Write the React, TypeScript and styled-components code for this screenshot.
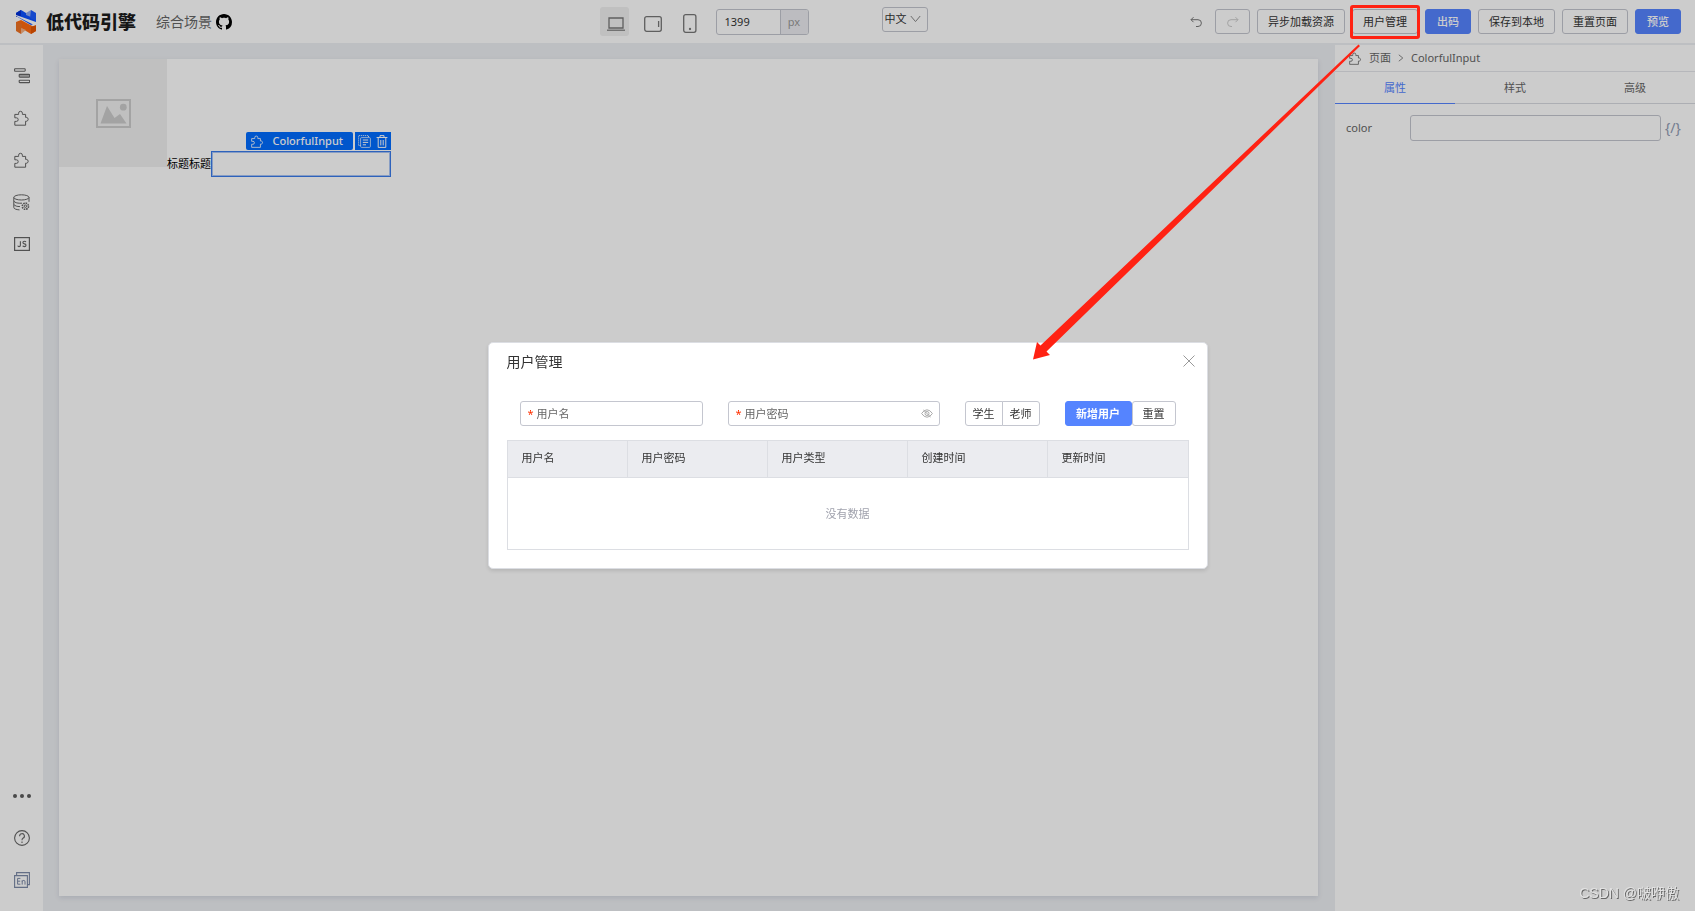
import React from "react";
import styled, { createGlobalStyle, css } from "styled-components";

const GlobalStyle = createGlobalStyle`
  *, *::before, *::after { box-sizing: border-box; }
  body {
    margin: 0;
    font-family: "Noto Sans", "Noto Sans CJK SC", sans-serif;
    font-size: 11px;
    line-height: 16px;
    color: #333;
    background: #fff;
  }
  button, input, select { font: inherit; color: inherit; margin: 0; }
  svg { display: block; flex: none; }
`;

const Page = styled.div`
  display: flex;
  flex-direction: column;
  min-height: 100vh;
  position: relative;
`;

/* ---------- header ---------- */

const Header = styled.header`
  display: flex;
  align-items: center;
  height: 45px;
  padding: 0 14px 0 16px;
  border-bottom: 2px solid #edeff3;
`;

const Brand = styled.div`
  display: flex;
  align-items: center;
  width: 327px;
`;

const BrandName = styled.span`
  margin: 0 20px 0 10px;
  font-size: 18px;
  line-height: 24px;
  font-weight: 900;
  color: #1c1c1c;
`;

const Scene = styled.a`
  display: flex;
  align-items: center;
  gap: 4px;
  font-size: 14px;
  line-height: 20px;
  color: #666;
  text-decoration: none;
`;

const Center = styled.div`
  flex: 1;
  display: flex;
  justify-content: center;
  align-items: center;
`;

const DeviceButton = styled.button<{ $active?: boolean }>`
  display: grid;
  place-items: center;
  width: 29px;
  height: 29px;
  margin-right: 8px;
  padding: 4px 0 0 3px;
  border: 0;
  border-radius: 3px;
  background: ${(p) => (p.$active ? "#f0f0f1" : "transparent")};
`;

const SizeField = styled.label`
  display: flex;
  width: 93px;
  height: 26px;
  margin: 0 73px 0 5px;
  border: 1px solid #c4c6cf;
  border-radius: 3px;
  overflow: hidden;
`;

const SizeInput = styled.input`
  flex: 1;
  min-width: 0;
  padding: 0 8px;
  border: 0;
  outline: 0;
  background: transparent;
`;

const Unit = styled.span`
  width: 28px;
  border-left: 1px solid #c4c6cf;
  background: #ebecf0;
  color: #999;
  line-height: 24px;
  text-align: center;
`;

const LangBox = styled.div`
  position: relative;
  margin-bottom: 4px;
`;

const LangSelect = styled.select`
  appearance: none;
  width: 46px;
  height: 25px;
  padding: 0 0 1px 2px;
  border: 1px solid #c4c6cf;
  border-radius: 3px;
  background: transparent;
`;

const LangArrow = styled.svg`
  position: absolute;
  right: 7px;
  top: 8px;
  pointer-events: none;
`;

const Actions = styled.div`
  display: flex;
  align-items: center;
  gap: 7px;
`;

const Button = styled.button<{ $primary?: boolean }>`
  display: inline-flex;
  align-items: center;
  justify-content: center;
  height: 25px;
  padding: 0 ${(p) => (p.$primary ? 11 : 10)}px;
  border: 1px solid ${(p) => (p.$primary ? "#5584ff" : "#c4c6cf")};
  border-radius: 3px;
  background: ${(p) => (p.$primary ? "#5584ff" : "#fff")};
  color: ${(p) => (p.$primary ? "#fff" : "#333")};
  font-weight: ${(p) => (p.$primary ? 500 : 400)};
  white-space: nowrap;
  &:disabled { color: #ccc; }
`;

const PlainButton = styled.button`
  display: grid;
  place-items: center;
  width: 24px;
  height: 25px;
  padding: 0;
  border: 0;
  background: transparent;
  color: #777;
`;

const RedoButton = styled(Button)`
  width: 35px;
`;

const Highlight = styled.span`
  position: relative;
  display: flex;
  &::after {
    content: "";
    position: absolute;
    inset: -4px -2px -5px;
    border: 3px solid #ff2213;
    border-radius: 3px;
    z-index: 20;
    pointer-events: none;
  }
`;

/* ---------- body ---------- */

const Main = styled.main`
  flex: 1;
  display: flex;
  align-items: stretch;
`;

const Sidebar = styled.nav`
  display: flex;
  flex-direction: column;
  justify-content: space-between;
  width: 43px;
  padding: 16px 0;
`;

const SideGroup = styled.div`
  display: flex;
  flex-direction: column;
  align-items: center;
  gap: 12px;
`;

const SideButton = styled.button`
  display: grid;
  place-items: center;
  width: 30px;
  height: 30px;
  padding: 0;
  border: 0;
  background: transparent;
  color: #666;
`;

const Stage = styled.div`
  flex: 1;
  display: flex;
  min-width: 0;
  padding: 14px 17px 15px 16px;
  background: #edeff3;
`;

const Canvas = styled.div`
  flex: 1;
  display: flex;
  align-items: flex-start;
  background: #fff;
  box-shadow: 0 2px 5px rgba(31, 50, 88, 0.12);
`;

const Placeholder = styled.div`
  display: grid;
  place-items: center;
  width: 108px;
  height: 108px;
  background: #f0f0f0;
`;

const CanvasField = styled.label`
  display: flex;
  align-items: center;
  margin-top: 92px;
  color: #000;
`;

const Selected = styled.span`
  position: relative;
  display: flex;
`;

const CanvasInput = styled.input`
  width: 180px;
  height: 26px;
  border: 1px solid #3a7bea;
  box-shadow: inset 0 0 0 1px #a9c5f6;
  outline: 0;
  background: #fff;
`;

const SelectionBar = styled.div`
  position: absolute;
  right: 0;
  bottom: 100%;
  display: flex;
  gap: 2px;
  margin-bottom: 1px;
  color: #fff;
`;

const SelectionName = styled.span`
  display: flex;
  align-items: center;
  gap: 8px;
  height: 18px;
  padding: 0 10px 0 5px;
  border-radius: 2px;
  background: #006cff;
  font-weight: 500;
`;

const SelectionTools = styled.span`
  display: flex;
  background: #006cff;
`;

const ToolButton = styled.button`
  display: grid;
  place-items: center;
  width: 18px;
  height: 18px;
  padding: 0;
  border: 0;
  background: transparent;
`;

const Panel = styled.aside`
  width: 360px;
`;

const Crumbs = styled.div`
  display: flex;
  align-items: center;
  gap: 7px;
  height: 27px;
  padding: 0 14px;
  border-bottom: 1px solid #e4e5ea;
  color: #666;
`;

const Tabs = styled.div`
  display: grid;
  grid-template-columns: repeat(3, 1fr);
  height: 32px;
  border-bottom: 1px solid #d8dae0;
`;

const Tab = styled.button<{ $active?: boolean }>`
  height: 32px;
  padding: 0;
  border: 0;
  background: transparent;
  color: #666;
  ${(p) =>
    p.$active &&
    css`
      color: #5584ff;
      border-bottom: 1px solid #5584ff;
    `}
`;

const PropRow = styled.label`
  display: flex;
  align-items: center;
  gap: 4px;
  padding: 11px 12px 0 11px;
  color: #666;
`;

const PropName = styled.span`
  width: 60px;
`;

const PropInput = styled.input`
  flex: 1;
  min-width: 0;
  height: 26px;
  border: 1px solid #c4c6cf;
  border-radius: 3px;
  outline: 0;
  background: transparent;
`;

const Variable = styled.span`
  width: 18px;
  font-size: 14px;
  color: #8f9bb3;
  white-space: nowrap;
`;

/* ---------- dialog ---------- */

const Mask = styled.div`
  position: fixed;
  inset: 0;
  z-index: 10;
  display: flex;
  align-items: center;
  justify-content: center;
  background: rgba(0, 0, 0, 0.2);
`;

const Dialog = styled.section`
  width: 720px;
  padding: 10px 18px 18px;
  border: 1px solid #dcdee3;
  border-radius: 5px;
  background: #fff;
  box-shadow: 0 2px 4px rgba(0, 0, 0, 0.12);
`;

const DialogHead = styled.div`
  display: flex;
  align-items: flex-start;
  justify-content: space-between;
  height: 48px;
`;

const DialogTitle = styled.h2`
  margin: 0;
  font-size: 14px;
  line-height: 18px;
  font-weight: 400;
`;

const CloseButton = styled.button`
  margin-right: -6px;
  padding: 2px 0;
  border: 0;
  background: transparent;
  color: #999;
`;

const Form = styled.form`
  display: flex;
  align-items: center;
  gap: 25px;
  padding: 0 12px 14px 13px;
`;

const Field = styled.label<{ $width: number }>`
  display: flex;
  align-items: center;
  gap: 3px;
  width: ${(p) => p.$width}px;
  height: 25px;
  padding: 0 6px 0 7px;
  border: 1px solid #c4c6cf;
  border-radius: 3px;
  color: #666;
  white-space: nowrap;
`;

const Required = styled.span`
  color: #ff3000;
`;

const FieldInput = styled.input`
  flex: 1;
  min-width: 0;
  padding: 0;
  border: 0;
  outline: 0;
  background: transparent;
`;

const Group = styled.div`
  display: flex;
`;

const TypeButton = styled(Button)`
  width: 38px;
  padding: 0;
  &:first-child { border-radius: 3px 0 0 3px; }
  &:last-child { border-radius: 0 3px 3px 0; margin-left: -1px; }
`;

const SubmitButton = styled(Button)`
  width: 67px;
  font-weight: 700;
`;

const Table = styled.table`
  width: 100%;
  table-layout: fixed;
  border-collapse: collapse;
  border: 1px solid #dcdee3;
`;

const Th = styled.th`
  height: 37px;
  padding: 0 14px 2px;
  border: 1px solid #dcdee3;
  background: #ebecf0;
  font-weight: 400;
  text-align: left;
`;

const Empty = styled.td`
  height: 72px;
  padding: 0;
  color: #a0a2ad;
  text-align: center;
`;

/* ---------- annotations ---------- */

const Arrow = styled.svg`
  position: absolute;
  top: 44px;
  right: 334px;
  z-index: 20;
  pointer-events: none;
`;

const Watermark = styled.div`
  position: fixed;
  right: 16px;
  bottom: 8px;
  z-index: 20;
  font-family: "Liberation Sans", "Noto Sans CJK SC", sans-serif;
  font-size: 14px;
  line-height: 20px;
  color: #e2e2e2;
  text-shadow: 1px 1px 0 #666;
`;

/* ---------- icons ---------- */

const Puzzle = ({ size = 16 }: { size?: number }) => (
  <svg width={size} height={size} viewBox="0 0 16 16" fill="none" stroke="currentColor" strokeLinejoin="round">
    <path d="M.8 4.4H4.6V3.2A1.9 1.9 0 0 1 8.4 3.2V4.4H11.6V7.4H12.8A2 2 0 0 1 12.8 11.2H11.6V15.2H.8V11.4H2.4A1.8 1.8 0 0 0 2.4 7.8H.8Z" />
  </svg>
);

const Logo = () => (
  <svg width="20" height="24" viewBox="0 0 20 24">
    <path d="M0 3 5 0 20 9V13L15 15 0 6Z" fill="#0a50ff" />
    <path d="M0 3 5 0V6L0 7Z" fill="#0030d8" />
    <path d="M10 3 15 0V7L10 5Z" fill="#8ea9f2" />
    <path d="M15 0 20 3V11L14 8Z" fill="#1c5cff" />
    <path d="M0 6 20 16V12L0 5Z" fill="#fff" />
    <path d="M0 12 5 10 20 18V21L15 24 0 15Z" fill="#ff6a10" />
    <path d="M0 12 6 14V20L5 24 0 21Z" fill="#ee7224" />
    <path d="M5 18 10 20 5 24Z" fill="#f5b184" />
    <path d="M15 17 20 15V21L15 24Z" fill="#e85500" />
  </svg>
);

const Github = () => (
  <svg width="16" height="16" viewBox="0 0 16 16" fill="#000">
    <path d="M8 0C3.58 0 0 3.58 0 8c0 3.54 2.29 6.53 5.47 7.59.4.07.55-.17.55-.38 0-.19-.01-.82-.01-1.49-2.01.37-2.53-.49-2.69-.94-.09-.23-.48-.94-.82-1.13-.28-.15-.68-.52-.01-.53.63-.01 1.08.58 1.23.82.72 1.21 1.87.87 2.33.66.07-.52.28-.87.51-1.07-1.78-.2-3.64-.89-3.64-3.95 0-.87.31-1.59.82-2.15-.08-.2-.36-1.02.08-2.12 0 0 .67-.21 2.2.82.64-.18 1.32-.27 2-.27s1.36.09 2 .27c1.53-1.04 2.2-.82 2.2-.82.44 1.1.16 1.92.08 2.12.51.56.82 1.27.82 2.15 0 3.07-1.87 3.75-3.65 3.95.29.25.54.73.54 1.48 0 1.07-.01 1.93-.01 2.2 0 .21.15.46.55.38A8.01 8.01 0 0 0 16 8c0-4.42-3.58-8-8-8Z" />
  </svg>
);

const Desktop = () => (
  <svg width="18" height="14" viewBox="0 0 18 14" fill="none" stroke="#777">
    <path d="M2 1H16V11H2Z" strokeWidth="1.3" />
    <path d="M0 13.2H18" strokeWidth="1.2" />
  </svg>
);

const Tablet = () => (
  <svg width="18" height="16" viewBox="0 0 18 16" fill="none" stroke="#777" strokeWidth="1.3">
    <rect x=".7" y=".7" width="16.6" height="14.6" rx="2" />
    <path d="M14.6 5V11" />
  </svg>
);

const Phone = () => (
  <svg width="14" height="19" viewBox="0 0 14 19" fill="none" stroke="#777" strokeWidth="1.3">
    <rect x=".7" y=".7" width="12.2" height="17.6" rx="2" />
    <circle cx="7" cy="15" r=".5" fill="#777" />
  </svg>
);

const Undo = ({ flip }: { flip?: boolean }) => (
  <svg width="12" height="12" viewBox="0 0 12 12" fill="none" stroke="currentColor">
    <path d={flip ? "M8.5 1.2 11 3.7 8.5 6.2M11 3.7H4A3.3 3.3 0 0 0 4 10.5H5" : "M3.5 1.2 1 3.7 3.5 6.2M1 3.7H8A3.3 3.3 0 0 1 8 10.5H6"} />
  </svg>
);

const Outline = () => (
  <svg width="16" height="16" viewBox="0 0 16 16" fill="none" stroke="currentColor" strokeWidth="1.1">
    <rect x=".6" y=".8" width="10.6" height="2.4" rx=".6" />
    <rect x="5.2" y="6.4" width="10.4" height="2.8" rx=".6" fill="#b4b4b4" />
    <rect x="5.2" y="12.2" width="10.4" height="2.4" rx=".6" />
  </svg>
);

const Database = () => (
  <svg width="17" height="17" viewBox="0 0 17 17" fill="none" stroke="currentColor">
    <ellipse cx="8.4" cy="3.4" rx="7.6" ry="2.6" />
    <path d="M.8 3.4V13.4C.8 14.8 3 15.6 6.5 15.9M16 3.4V7.8M.8 7C2 9 5 9.4 9 9.2M.8 10.4C2 12 4 12.6 7 12.6" />
    <circle cx="12.4" cy="12.2" r="3.1" strokeWidth="1.6" strokeDasharray="1.6 .8" />
    <circle cx="12.4" cy="12.2" r="1.2" />
  </svg>
);

const Js = () => (
  <svg width="16" height="14" viewBox="0 0 16 14" fill="none" stroke="currentColor">
    <rect x=".6" y=".6" width="14.8" height="12.8" strokeWidth="1.2" />
    <path d="M6.4 4.3V8.3Q6.4 9.6 5 9.6 4 9.6 3.8 8.6M11.9 5Q11.6 4.3 10.4 4.3 8.9 4.3 8.9 5.5 8.9 6.7 10.4 6.9 12 7.1 12 8.3 12 9.6 10.4 9.6 9 9.6 8.7 8.8" strokeWidth="1.1" />
  </svg>
);

const Dots = () => (
  <svg width="18" height="4" viewBox="0 0 18 4" fill="#5c5c5c">
    <circle cx="2" cy="2" r="2" />
    <circle cx="9" cy="2" r="2" />
    <circle cx="16" cy="2" r="2" />
  </svg>
);

const Help = () => (
  <svg width="16" height="16" viewBox="0 0 16 16" fill="none" stroke="currentColor" strokeWidth="1.1">
    <circle cx="8" cy="8" r="7.4" />
    <path d="M5.6 6.2A2.4 2.4 0 1 1 8.9 8.3Q8 8.8 8 10.2M8 11.6V13" />
  </svg>
);

const English = () => (
  <svg width="16" height="16" viewBox="0 0 16 16" fill="none" stroke="#7c8aa8">
    <path d="M.6 3.6H13.4V15.4H.6ZM2.6 3.4V.6H15.4V12.6H13.6" strokeWidth="1.1" />
    <path d="M6.4 6.4H3.6V12.2H6.4M3.6 9.2H6.2M8.2 12.6V8.2M8.2 9.6Q8.8 8.4 9.8 8.4 11 8.4 11 9.8V12.6" />
  </svg>
);

const Picture = () => (
  <svg width="35" height="29" viewBox="0 0 35 29">
    <rect x="1" y="1" width="33" height="27" fill="none" stroke="#ccc" strokeWidth="2" />
    <path d="M4.5 24.5 11 7 18.5 19 24 15 30.5 24.5Z" fill="#ccc" />
    <circle cx="27.3" cy="8.2" r="3.4" fill="#ccc" />
  </svg>
);

const Copy = () => (
  <svg width="13" height="13" viewBox="0 0 13 13" fill="none" stroke="currentColor">
    <path d="M2.5 10.5H.6V.6H10.5V2.4" strokeDasharray="1 1" />
    <rect x="2.6" y="2.6" width="9.8" height="9.8" rx="1" opacity=".7" />
    <path d="M4.8 5H10.2M4.8 7.4H10.2M4.8 9.8H8" />
  </svg>
);

const Trash = () => (
  <svg width="12" height="13" viewBox="0 0 12 13" fill="none" stroke="currentColor">
    <path d="M.6 2.5H11.4M4 2.4V.6H8V2.4M2.2 2.6V12.4H9.8V2.6M4.8 5V10.4M7.2 5V10.4" />
  </svg>
);

const Eye = () => (
  <svg width="12" height="9" viewBox="0 0 12 9" fill="none" stroke="#aaa">
    <path d="M.6 4.5Q3 .8 6 .8T11.4 4.5Q9 8.2 6 8.2T.6 4.5ZM2.4 1 9.6 8" />
    <circle cx="6" cy="4.5" r="2" />
  </svg>
);

const columns = [
  { title: "用户名", width: 120 },
  { title: "用户密码", width: 140 },
  { title: "用户类型", width: 140 },
  { title: "创建时间", width: 140 },
  { title: "更新时间" },
];

export default function App() {
  return (
    <Page>
      <GlobalStyle />
      <Header>
        <Brand>
          <Logo />
          <BrandName>低代码引擎</BrandName>
          <Scene href="#github">
            综合场景
            <Github />
          </Scene>
        </Brand>
        <Center>
          <DeviceButton $active aria-label="桌面"><Desktop /></DeviceButton>
          <DeviceButton aria-label="平板"><Tablet /></DeviceButton>
          <DeviceButton aria-label="手机"><Phone /></DeviceButton>
          <SizeField>
            <SizeInput defaultValue="1399" aria-label="画布宽度" />
            <Unit>px</Unit>
          </SizeField>
          <LangBox>
            <LangSelect aria-label="语言" defaultValue="zh">
              <option value="zh">中文</option>
            </LangSelect>
            <LangArrow width="11" height="8" viewBox="0 0 11 8" fill="none" stroke="#888">
              <path d="M.8 1 5.5 6.6 10.2 1" />
            </LangArrow>
          </LangBox>
        </Center>
        <Actions>
          <PlainButton aria-label="撤销"><Undo /></PlainButton>
          <RedoButton disabled aria-label="重做"><Undo flip /></RedoButton>
          <Button>异步加载资源</Button>
          <Highlight><Button>用户管理</Button></Highlight>
          <Button $primary>出码</Button>
          <Button>保存到本地</Button>
          <Button>重置页面</Button>
          <Button $primary>预览</Button>
        </Actions>
      </Header>

      <Main>
        <Sidebar>
          <SideGroup>
            <SideButton aria-label="大纲树"><Outline /></SideButton>
            <SideButton aria-label="组件库"><Puzzle /></SideButton>
            <SideButton aria-label="区块"><Puzzle /></SideButton>
            <SideButton aria-label="数据源"><Database /></SideButton>
            <SideButton aria-label="源码"><Js /></SideButton>
          </SideGroup>
          <SideGroup>
            <SideButton aria-label="更多"><Dots /></SideButton>
            <SideButton aria-label="帮助"><Help /></SideButton>
            <SideButton aria-label="切换语言"><English /></SideButton>
          </SideGroup>
        </Sidebar>

        <Stage>
          <Canvas>
            <Placeholder><Picture /></Placeholder>
            <CanvasField>
              标题标题
              <Selected>
                <CanvasInput />
                <SelectionBar>
                  <SelectionName><Puzzle size={13} />ColorfulInput</SelectionName>
                  <SelectionTools>
                    <ToolButton aria-label="复制"><Copy /></ToolButton>
                    <ToolButton aria-label="删除"><Trash /></ToolButton>
                  </SelectionTools>
                </SelectionBar>
              </Selected>
            </CanvasField>
          </Canvas>
        </Stage>

        <Panel>
          <Crumbs>
            <Puzzle size={13} />
            <span>页面</span>
            <svg width="6" height="8" viewBox="0 0 6 8" fill="none" stroke="#888"><path d="M.8 .8 4.8 4 .8 7.2" /></svg>
            <span>ColorfulInput</span>
          </Crumbs>
          <Tabs role="tablist">
            <Tab role="tab" $active>属性</Tab>
            <Tab role="tab">样式</Tab>
            <Tab role="tab">高级</Tab>
          </Tabs>
          <PropRow>
            <PropName>color</PropName>
            <PropInput />
            <Variable>{"{/}"}</Variable>
          </PropRow>
        </Panel>
      </Main>

      <Mask>
        <Dialog role="dialog" aria-labelledby="dialog-title">
          <DialogHead>
            <DialogTitle id="dialog-title">用户管理</DialogTitle>
            <CloseButton aria-label="关闭">
              <svg width="12" height="12" viewBox="0 0 12 12" stroke="currentColor"><path d="M.5.5 11.5 11.5M11.5.5.5 11.5" /></svg>
            </CloseButton>
          </DialogHead>
          <Form onSubmit={(e) => e.preventDefault()}>
            <Field $width={183}>
              <Required>*</Required>用户名
              <FieldInput />
            </Field>
            <Field $width={212}>
              <Required>*</Required>用户密码
              <FieldInput type="password" />
              <Eye />
            </Field>
            <Group>
              <TypeButton type="button">学生</TypeButton>
              <TypeButton type="button">老师</TypeButton>
            </Group>
            <Group>
              <SubmitButton $primary type="submit">新增用户</SubmitButton>
              <Button type="reset">重置</Button>
            </Group>
          </Form>
          <Table>
            <colgroup>
              {columns.map((c) => <col key={c.title} width={c.width} />)}
            </colgroup>
            <thead>
              <tr>{columns.map((c) => <Th key={c.title}>{c.title}</Th>)}</tr>
            </thead>
            <tbody>
              <tr><Empty colSpan={5}>没有数据</Empty></tr>
            </tbody>
          </Table>
        </Dialog>
      </Mask>

      <Arrow width="330" height="318" viewBox="0 0 330 318" fill="#ff2213">
        <path d="M327.5 .5 329 2 15.5 307.5 19 311 2 315.5 6 298 9.5 301.5Z" />
      </Arrow>
      <Watermark>CSDN @啵咿傲</Watermark>
    </Page>
  );
}
